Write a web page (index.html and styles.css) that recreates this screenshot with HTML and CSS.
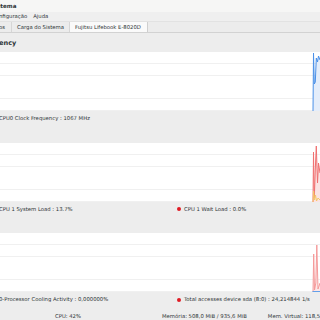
FILE: index.html
```html
<!DOCTYPE html>
<html lang="pt">
<head>
    <meta charset="UTF-8">
    <title>Monitor do Sistema</title>
    <link rel="stylesheet" href="styles.css">
</head>
<body>
    <div class="win">
        <div class="titlebar"><span class="cut-title">stema</span></div>
        <div class="menubar">
            <span class="cut-menu">nfiguração</span>
            <span>Ajuda</span>
        </div>
        <div class="tabs">
            <div class="tab tab-first">os</div>
            <div class="tab tab-load">Carga do Sistema</div>
            <div class="tab active">Fujitsu Lifebook E-8020D</div>
        </div>

        <div class="content">
            <div class="heading">ency</div>

            <div class="block">
                <div class="chart">
                    <svg viewBox="0 0 320 59" width="320" height="59">
                        <polygon points="313,59 313.5,1 314.3,32 315.3,30 316.3,6 317.5,10 318.5,4 320,8 320,59" fill="#e4edfa"/>
                        <polyline points="313,59 313.5,1 314.3,32 315.3,30 316.3,6 317.5,10 318.5,4 320,8" fill="none" stroke="#4a90e8" stroke-width="1"/>
                    </svg>
                </div>
                <div class="legend">
                    <span class="lg lg-a cut-legend">CPU0 Clock Frequency : 1067 MHz</span>
                </div>
            </div>

            <div class="block">
                <div class="chart">
                    <svg viewBox="0 0 320 59" width="320" height="59">
                        <polygon points="313,59 313.5,9 314.3,55 315.3,26 316.3,3 317.5,40 318.5,20 320,30 320,59" fill="#fbe3e3"/>
                        <polyline points="313,59 313.5,9 314.3,55 315.3,26 316.3,3 317.5,40 318.5,20 320,30" fill="none" stroke="#f07070" stroke-width="1"/>
                        <polyline points="313,59 313.6,48 314.5,57 315.5,52 316.5,58 318,55 320,57" fill="none" stroke="#f5c96a" stroke-width="1"/>
                    </svg>
                </div>
                <div class="legend">
                    <span class="lg lg-a cut-legend">CPU 1 System Load : 13.7%</span>
                    <span class="lg lg-b"><i class="dot"></i>CPU 1 Wait Load : 0.0%</span>
                </div>
            </div>

            <div class="block block-last">
                <div class="chart">
                    <svg viewBox="0 0 320 59" width="320" height="59">
                        <polygon points="313,59 313.7,21 314.5,57 315.8,50 316.8,12 318,56 320,50 320,59" fill="#fce6e6"/>
                        <polyline points="313,59 313.7,21 314.5,57 315.8,50 316.8,12 318,56 320,50" fill="none" stroke="#f59a9a" stroke-width="1"/>
                        <line x1="312.5" y1="58.5" x2="320" y2="58.5" stroke="#62a0ea" stroke-width="1"/>
                    </svg>
                </div>
                <div class="legend">
                    <span class="lg lg-a cut-legend">0-Processor Cooling Activity : 0,000000%</span>
                    <span class="lg lg-b"><i class="dot"></i>Total accesses device sda (8:0) : 24,214844 1/s</span>
                </div>
            </div>
        </div>

        <div class="statusbar">
            <span class="st st-cpu">CPU: 42%</span>
            <span class="st st-mem">Memória: 508,0 MiB / 935,6 MiB</span>
            <span class="st st-virt">Mem. Virtual: 118,5 MiB</span>
        </div>
    </div>
</body>
</html>
```

FILE: styles.css
```css
html, body {
    margin: 0;
    padding: 0;
}

body {
    width: 320px;
    height: 320px;
    overflow: hidden;
    background: #ededed;
    font-family: "DejaVu Sans", sans-serif;
    font-size: 5.3px;
    color: #2e3436;
}

.win {
    display: flex;
    flex-direction: column;
    width: 320px;
    white-space: nowrap;
}

.titlebar {
    height: 12px;
    line-height: 12px;
    background: #f6f6f5;
    font-weight: bold;
    font-size: 5.6px;
}

.cut-title {
    display: inline-block;
    margin-left: -3px;
}

.menubar {
    height: 9px;
    line-height: 9px;
    background: #efefef;
    border-bottom: 1px solid #e2e2e2;
    display: flex;
    gap: 6px;
}

.cut-menu {
    margin-left: -1px;
}

.tabs {
    height: 10px;
    display: flex;
    background: #ececec;
    border-bottom: 1px solid #d2d2d2;
}

.tab {
    line-height: 11px;
    border-right: 1px solid #d6d6d6;
}

.tab-first {
    width: 12px;
    margin-left: -1px;
}

.tab-load {
    padding-left: 5px;
    width: 52px;
}

.tab.active {
    background: #fafafa;
    width: 72px;
    padding-left: 5px;
    border-left: 1px solid #d6d6d6;
    border-right: 1px solid #cfcfcf;
    margin-left: -1px;
}

.content {
    display: flex;
    flex-direction: column;
}

.heading {
    height: 19px;
    line-height: 21px;
    font-weight: bold;
    font-size: 6.6px;
    margin-left: -1px;
}

.block {
    height: 90.5px;
}

.block-last {
    height: 76px;
}

.chart {
    height: 59px;
    background-color: #fff;
    background-image: repeating-linear-gradient(to bottom,
        transparent 0, transparent 11px, #f0f0f0 11px, #f0f0f0 11.8px);
}

.chart svg {
    display: block;
}

.legend {
    height: 15px;
    line-height: 15px;
    display: flex;
}

.lg-a {
    width: 178px;
}

.cut-legend {
    margin-left: -1px;
}

.lg-b {
    display: flex;
    align-items: center;
}

.dot {
    display: inline-block;
    width: 4px;
    height: 4px;
    border-radius: 50%;
    background: #e01b24;
    margin-right: 3px;
}

.statusbar {
    height: 14px;
    line-height: 14px;
    display: flex;
}

.st-cpu {
    margin-left: 55px;
}

.st-mem {
    margin-left: 81px;
}

.st-virt {
    margin-left: 21px;
}
```
